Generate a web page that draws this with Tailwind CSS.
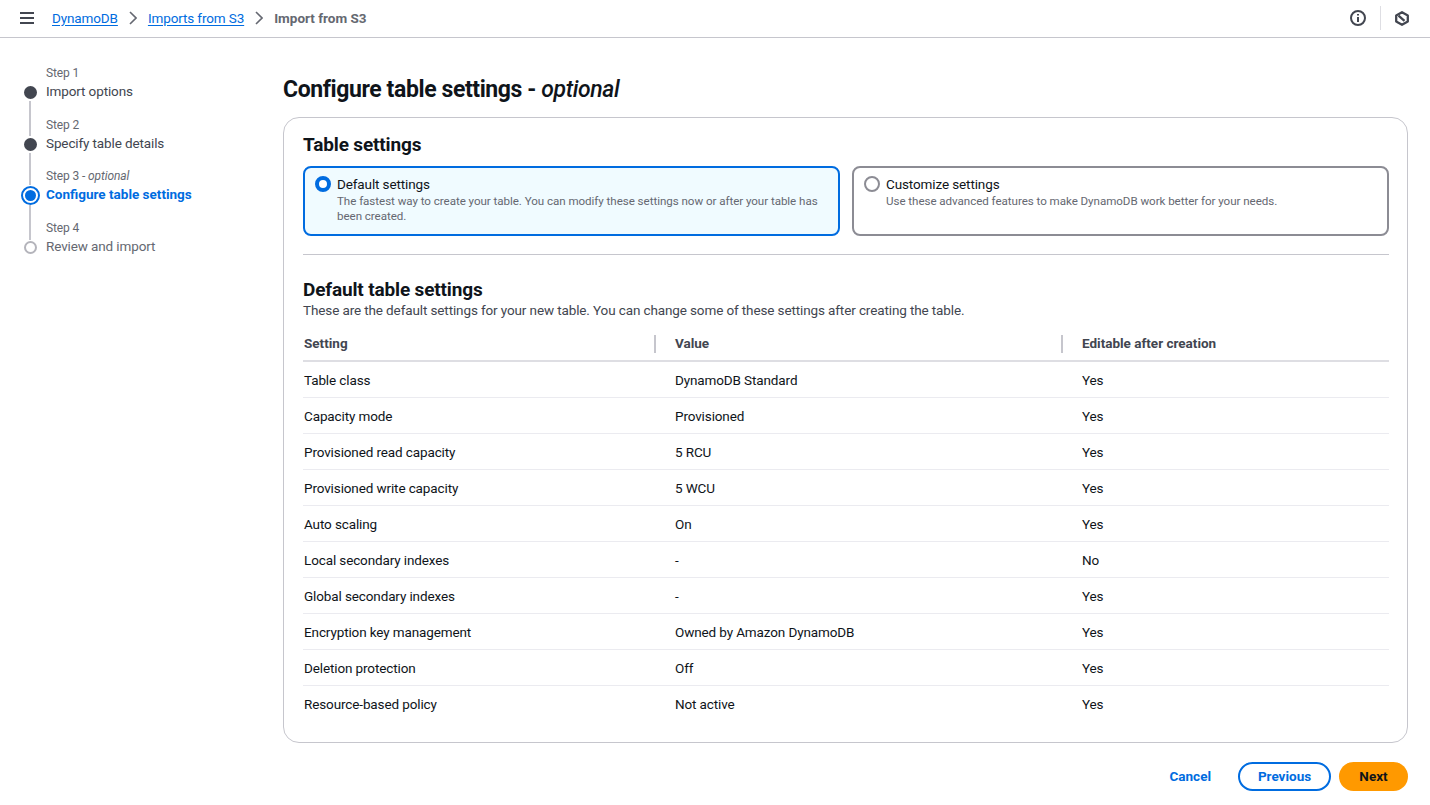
<!DOCTYPE html>
<html lang="en"><head><meta charset="utf-8"><title>Import from S3</title>
<script src="https://cdn.jsdelivr.net/npm/@tailwindcss/browser@4"></script></head>
<body class="bg-white font-['Roboto',sans-serif] text-[13.5px] tracking-[-0.12px] text-[#0f141a] overflow-hidden">
<div class="w-[1430px] h-[805px] flex flex-col">
<header class="h-[38px] shrink-0 border-b border-[#c6c6cd] flex items-center pl-[20px] pr-[20px]">
  <svg class="w-[14px] h-[12px] text-[#424650] -mt-[1px]" viewBox="0 0 14 12" fill="none" stroke="currentColor" stroke-width="2"><path d="M0 1h14M0 6h14M0 11h14"/></svg>
  <a class="ml-[18px] text-[#006ce0] underline underline-offset-2 -mt-[1px]">DynamoDB</a>
  <svg class="mx-[11px] w-[8px] h-[14px] text-[#656871] -mt-[1px]" viewBox="0 0 8 14" fill="none" stroke="currentColor" stroke-width="1.6"><path d="M1 1l6 6-6 6"/></svg>
  <a class="text-[#006ce0] underline underline-offset-2 -mt-[1px]">Imports from S3</a>
  <svg class="mx-[11px] w-[8px] h-[14px] text-[#656871] -mt-[1px]" viewBox="0 0 8 14" fill="none" stroke="currentColor" stroke-width="1.6"><path d="M1 1l6 6-6 6"/></svg>
  <span class="text-[#656871] font-bold tracking-normal -mt-[1px]">Import from S3</span>
  <div class="ml-auto flex items-center -mt-[1px]">
    <svg class="w-[16px] h-[16px] text-[#424650]" viewBox="0 0 16 16" fill="none" stroke="currentColor" stroke-width="2"><circle cx="8" cy="8" r="7"/><path d="M8 7v5M8 4v1.6"/></svg>
    <span class="mx-[14px] w-px h-[24px] bg-[#dedee3]"></span>
    <svg class="w-[14px] h-[15px] mr-[1px] text-[#424650]" viewBox="0 0 14 15" fill="none" stroke="currentColor" stroke-width="2.3" stroke-linejoin="round"><path d="M7 1.2l5.8 3.2v6.2L7 13.8l-5.8-3.2V4.4z"/><path d="M3.5 4.6l6 5.2"/></svg>
  </div>
</header>
<div class="flex flex-1 min-h-0">
  <nav class="w-[283px] shrink-0 pl-[20px] pt-[26px]">
    <ol class="flex flex-col">
      <li class="flex h-[51.7px] gap-[6px]">
        <div class="w-[20px] flex flex-col items-center pt-[22px]"><span class="w-[13px] h-[13px] rounded-full bg-[#424650] shrink-0"></span><span class="w-[2px] flex-1 bg-[#c6c6cd] mt-[2px] -mb-[20px]"></span></div>
        <div><div class="text-[12px] leading-[18px] text-[#656871]">Step 1</div><div class="leading-[19px] text-[#424650]">Import options</div></div>
      </li>
      <li class="flex h-[51.7px] gap-[6px]">
        <div class="w-[20px] flex flex-col items-center pt-[22px]"><span class="w-[13px] h-[13px] rounded-full bg-[#424650] shrink-0"></span><span class="w-[2px] flex-1 bg-[#c6c6cd] mt-[2px] -mb-[18px]"></span></div>
        <div><div class="text-[12px] leading-[18px] text-[#656871]">Step 2</div><div class="leading-[19px] text-[#424650]">Specify table details</div></div>
      </li>
      <li class="flex h-[51.7px] gap-[6px]">
        <div class="w-[20px] flex flex-col items-center pt-[19px]"><span class="w-[19px] h-[19px] rounded-full border-2 border-[#006ce0] bg-white flex items-center justify-center shrink-0"><span class="w-[11px] h-[11px] rounded-full bg-[#006ce0]"></span></span><span class="w-[2px] flex-1 bg-[#c6c6cd] -mb-[21px]"></span></div>
        <div><div class="text-[12px] leading-[18px] text-[#656871]">Step 3 - <i>optional</i></div><div class="leading-[19px] text-[#006ce0] font-bold tracking-normal">Configure table settings</div></div>
      </li>
      <li class="flex h-[51.7px] gap-[6px]">
        <div class="w-[20px] flex flex-col items-center pt-[22px]"><span class="w-[13px] h-[13px] rounded-full border-2 border-[#b4b4bb] bg-white shrink-0"></span></div>
        <div><div class="text-[12px] leading-[18px] text-[#656871]">Step 4</div><div class="leading-[19px] text-[#656871]">Review and import</div></div>
      </li>
    </ol>
  </nav>
  <main class="w-[1125px] pt-[36px]">
    <h1 class="text-[23px] tracking-[-0.4px] leading-[32px] font-bold h-[43px]">Configure table settings - <i class="font-medium">optional</i></h1>
    <section class="border border-[#c6c6cd] rounded-[16px] h-[626px] pl-[19px] pr-[18px] pt-[15px]">
      <h2 class="text-[19px] tracking-[-0.15px] leading-[24px] font-bold">Table settings</h2>
      <div class="grid grid-cols-2 gap-[12px] mt-[9px] mr-0">
        <div class="h-[70px] rounded-[8px] border-2 border-[#006ce0] bg-[#f0fbff] flex gap-[6px] pl-[10px] pt-[8px] pr-[12px]">
          <span class="w-[16px] h-[16px] rounded-full border-[4px] border-[#006ce0] bg-white shrink-0"></span>
          <div><div class="leading-[16px]">Default settings</div><div class="text-[11.6px] tracking-[-0.05px] leading-[15px] text-[#656871] mt-[2px]">The fastest way to create your table. You can modify these settings now or after your table has been created.</div></div>
        </div>
        <div class="h-[70px] rounded-[8px] border-2 border-[#8c8c94] bg-white flex gap-[6px] pl-[10px] pt-[8px] pr-[12px]">
          <span class="w-[16px] h-[16px] rounded-full border-2 border-[#8c8c94] bg-white shrink-0"></span>
          <div><div class="leading-[16px]">Customize settings</div><div class="text-[11.6px] tracking-[-0.05px] leading-[15px] text-[#656871] mt-[2px]">Use these advanced features to make DynamoDB work better for your needs.</div></div>
        </div>
      </div>
      <hr class="border-0 border-t border-[#c6c6cd] mt-[18px]">
      <h2 class="text-[19px] tracking-[-0.15px] leading-[24px] font-bold mt-[23px]">Default table settings</h2>
      <p class="leading-[20px] text-[#424650] -mt-[2px]">These are the default settings for your new table. You can change some of these settings after creating the table.</p>
      <div class="mt-[8px] grid grid-cols-[353px_407px_1fr] text-[#424650]">
        <div class="col-span-3 grid grid-cols-subgrid h-[34px] border-b-2 border-[#dedee3] items-center font-bold tracking-normal">
          <div class="pl-[1px] h-[18px] leading-[17px] border-r-2 border-[#c6c6cd]">Setting</div>
          <div class="pl-[19px] h-[18px] leading-[17px] border-r-2 border-[#c6c6cd]">Value</div>
          <div class="pl-[19px] h-[18px] leading-[17px]">Editable after creation</div>
        </div>
        <div class="col-span-3 grid grid-cols-subgrid h-[36px] border-b border-[#ebebf0] items-center text-[#0f141a]"><div class="pl-[1px] pt-[1px]">Table class</div><div class="pl-[19px] pt-[1px]">DynamoDB Standard</div><div class="pl-[19px] pt-[1px]">Yes</div></div>
        <div class="col-span-3 grid grid-cols-subgrid h-[36px] border-b border-[#ebebf0] items-center text-[#0f141a]"><div class="pl-[1px] pt-[1px]">Capacity mode</div><div class="pl-[19px] pt-[1px]">Provisioned</div><div class="pl-[19px] pt-[1px]">Yes</div></div>
        <div class="col-span-3 grid grid-cols-subgrid h-[36px] border-b border-[#ebebf0] items-center text-[#0f141a]"><div class="pl-[1px] pt-[1px]">Provisioned read capacity</div><div class="pl-[19px] pt-[1px]">5 RCU</div><div class="pl-[19px] pt-[1px]">Yes</div></div>
        <div class="col-span-3 grid grid-cols-subgrid h-[36px] border-b border-[#ebebf0] items-center text-[#0f141a]"><div class="pl-[1px] pt-[1px]">Provisioned write capacity</div><div class="pl-[19px] pt-[1px]">5 WCU</div><div class="pl-[19px] pt-[1px]">Yes</div></div>
        <div class="col-span-3 grid grid-cols-subgrid h-[36px] border-b border-[#ebebf0] items-center text-[#0f141a]"><div class="pl-[1px] pt-[1px]">Auto scaling</div><div class="pl-[19px] pt-[1px]">On</div><div class="pl-[19px] pt-[1px]">Yes</div></div>
        <div class="col-span-3 grid grid-cols-subgrid h-[36px] border-b border-[#ebebf0] items-center text-[#0f141a]"><div class="pl-[1px] pt-[1px]">Local secondary indexes</div><div class="pl-[19px] pt-[1px]">-</div><div class="pl-[19px] pt-[1px]">No</div></div>
        <div class="col-span-3 grid grid-cols-subgrid h-[36px] border-b border-[#ebebf0] items-center text-[#0f141a]"><div class="pl-[1px] pt-[1px]">Global secondary indexes</div><div class="pl-[19px] pt-[1px]">-</div><div class="pl-[19px] pt-[1px]">Yes</div></div>
        <div class="col-span-3 grid grid-cols-subgrid h-[36px] border-b border-[#ebebf0] items-center text-[#0f141a]"><div class="pl-[1px] pt-[1px]">Encryption key management</div><div class="pl-[19px] pt-[1px]">Owned by Amazon DynamoDB</div><div class="pl-[19px] pt-[1px]">Yes</div></div>
        <div class="col-span-3 grid grid-cols-subgrid h-[36px] border-b border-[#ebebf0] items-center text-[#0f141a]"><div class="pl-[1px] pt-[1px]">Deletion protection</div><div class="pl-[19px] pt-[1px]">Off</div><div class="pl-[19px] pt-[1px]">Yes</div></div>
        <div class="col-span-3 grid grid-cols-subgrid h-[36px] border-b border-transparent items-center text-[#0f141a]"><div class="pl-[1px] pt-[1px]">Resource-based policy</div><div class="pl-[19px] pt-[1px]">Not active</div><div class="pl-[19px] pt-[1px]">Yes</div></div>
      </div>
    </section>
    <div class="flex justify-end items-center mt-[19px] font-bold tracking-normal">
      <button class="text-[#006ce0] font-bold mr-[27px]">Cancel</button>
      <button class="w-[93px] h-[29px] rounded-full border-2 border-[#006ce0] text-[#006ce0] font-bold mr-[8px]">Previous</button>
      <button class="w-[69px] h-[29px] rounded-full bg-[#ff9900] text-[#0f141a] font-bold">Next</button>
    </div>
  </main>
</div>
</div>
</body></html>
